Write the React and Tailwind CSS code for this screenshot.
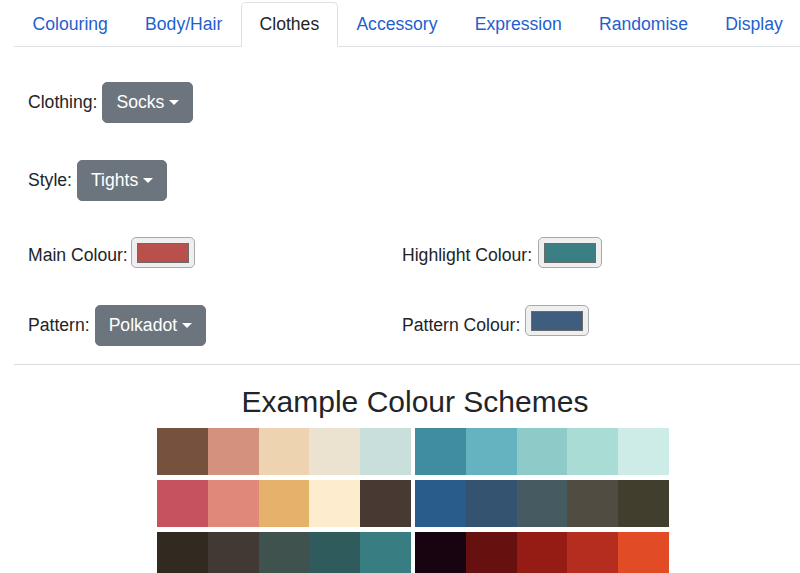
import { useState } from 'react';

const TABS = ['Colouring', 'Body/Hair', 'Clothes', 'Accessory', 'Expression', 'Randomise', 'Display'];

const SCHEMES = [
  [
    ['#76523e', '#d4917e', '#eed3b1', '#ebe3cf', '#c9dfdb'],
    ['#418da0', '#65b2c0', '#8ecbc8', '#aadcd6', '#cdece7'],
  ],
  [
    ['#c5525c', '#e0897a', '#e4b26b', '#fdeccd', '#493933'],
    ['#2a5c8b', '#335371', '#465b61', '#514c41', '#413e2e'],
  ],
  [
    ['#322920', '#423934', '#3f524e', '#2f5b5d', '#377d82'],
    ['#170410', '#661110', '#941c15', '#b42d1e', '#e14c27'],
  ],
];

function Dropdown({ label }) {
  return (
    <button className="bg-[#6c757d] border border-[#6c757d] text-white rounded-[5px] px-[13px] py-[6.3px] leading-[26.4px] text-[17.6px] flex items-center">
      {label}
      <span className="inline-block w-0 h-0 border-x-[5px] border-x-transparent border-t-[5px] border-t-white ml-[5px]" />
    </button>
  );
}

function ColourBox({ colour }) {
  return (
    <div className="w-[64px] h-[31px] bg-[#efeff0] border border-[#a9a9ad] rounded-[5px] flex items-center justify-center">
      <div className="w-[52px] h-[20px] border border-[#6b6b6b]" style={{ backgroundColor: colour }} />
    </div>
  );
}

export default function App() {
  const [tab, setTab] = useState('Clothes');

  return (
    <div className="w-[800px] h-[573px] overflow-hidden bg-white text-[#212529] font-['Liberation_Sans',Arial,sans-serif] text-[17.6px]">
      <div className="ml-[14px] w-[802px]">
        {/* Tabs */}
        <ul className="flex mt-[2px] border-b border-[#dee2e6]">
          {TABS.map((t) => (
            <li key={t} className="-mb-px">
              <button
                onClick={() => setTab(t)}
                className={`block px-[17.6px] py-[8.3px] leading-[26.4px] border rounded-t-[5px] ${
                  tab === t ? 'border-[#dee2e6] border-b-white bg-white text-[#212529]' : 'border-transparent text-[#1f5fce]'
                }`}
              >
                {t}
              </button>
            </li>
          ))}
        </ul>

        {/* Options */}
        <div className="px-[14px]">
          <div className="mt-[35px] h-[41px] flex items-center gap-[5px]">
            <span>Clothing:</span>
            <Dropdown label="Socks" />
          </div>
          <div className="mt-[37px] h-[41px] flex items-center gap-[5px]">
            <span>Style:</span>
            <Dropdown label="Tights" />
          </div>
          <div className="mt-[31px] grid grid-cols-[374px_1fr]">
            <div className="h-[41px] flex items-center gap-[3px]">
              <span className="pt-[6px]">Main Colour:</span>
              <ColourBox colour="#b9504c" />
            </div>
            <div className="h-[41px] flex items-center gap-[6px]">
              <span className="pt-[6px]">Highlight Colour:</span>
              <ColourBox colour="#3a7f84" />
            </div>
          </div>
          <div className="mt-[32px] grid grid-cols-[374px_1fr]">
            <div className="h-[41px] flex items-center gap-[5px]">
              <span>Pattern:</span>
              <Dropdown label="Polkadot" />
            </div>
            <div className="h-[41px] flex items-center gap-[5px]">
              <span>Pattern Colour:</span>
              <div className="-mt-[10px]">
                <ColourBox colour="#3f5d7f" />
              </div>
            </div>
          </div>
        </div>

        <hr className="mt-[18px] border-t border-[#dcdcdc]" />

        <h3 className="mt-[19px] text-[30px] leading-[36px] text-center">Example Colour Schemes</h3>

        <div className="mt-[8px] ml-[143px] flex flex-col gap-[5px]">
          {SCHEMES.map((row, i) => (
            <div key={i} className="flex gap-[4px]">
              {row.map((block, j) => (
                <div key={j} className="w-[254px] h-[47px] flex">
                  {block.map((c) => (
                    <div key={c} className="flex-1" style={{ backgroundColor: c }} />
                  ))}
                </div>
              ))}
            </div>
          ))}
        </div>
      </div>
    </div>
  );
}
